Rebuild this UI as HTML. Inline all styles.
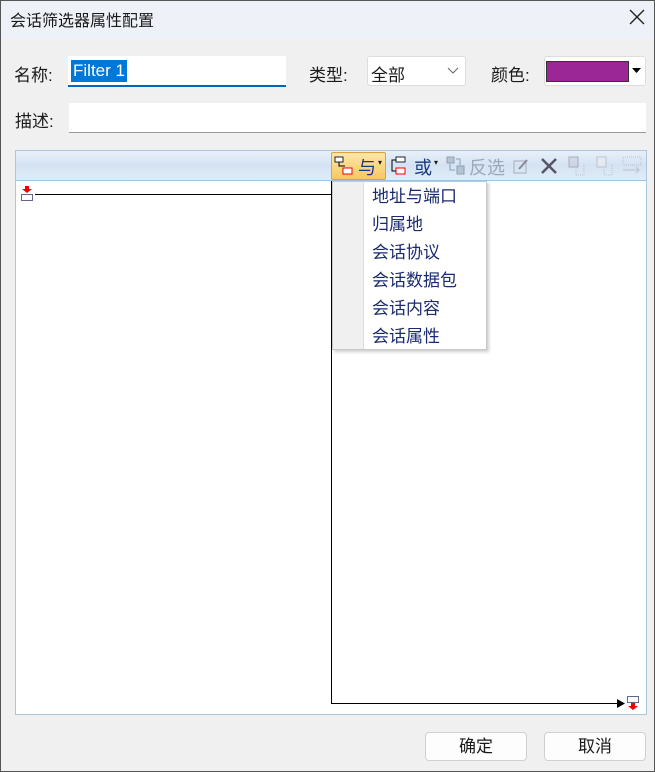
<!DOCTYPE html>
<html><head><meta charset="utf-8"><style>
*{margin:0;padding:0;box-sizing:border-box}
body{width:655px;height:772px;background:#f0f0f0;font-family:"Liberation Sans","Noto Sans CJK SC",sans-serif;font-size:16px;color:#1a1a1a;position:relative;overflow:hidden}
.a{position:absolute}
.lbl{font-size:16px}
</style></head><body>
<div class="a" style="left:0;top:0;width:655px;height:38px;background:#eef2f8"></div>
<div class="a lbl" style="left:10px;top:7px;font-size:16px">会话筛选器属性配置</div>
<svg class="a" style="left:628px;top:8px" width="18" height="18"><path d="M2 2L16 16M16 2L2 16" stroke="#222" stroke-width="1.4"/></svg>

<div class="a lbl" style="left:14px;top:61px;font-size:17px">名称:</div>
<div class="a" style="left:68px;top:56px;width:218px;height:31px;background:#fff;border-bottom:2px solid #0067c0"></div>
<div class="a" style="left:71px;top:60px;height:22px;background:#0078d7;color:#fff;padding:0 2px;font-size:17px;line-height:22px">Filter 1</div>
<div class="a lbl" style="left:309px;top:61px;font-size:17px">类型:</div>
<div class="a" style="left:367px;top:56px;width:99px;height:30px;background:#fff;border:1px solid #ddd;border-radius:3px"></div>
<div class="a lbl" style="left:371px;top:61px;font-size:17px">全部</div>
<svg class="a" style="left:447px;top:67px" width="12" height="8"><path d="M1 1L6 6L11 1" stroke="#666" fill="none"/></svg>
<div class="a lbl" style="left:491px;top:61px;font-size:17px">颜色:</div>
<div class="a" style="left:544px;top:56px;width:102px;height:30px;background:#fff;border:1px solid #ddd;border-radius:3px"></div>
<div class="a" style="left:546px;top:61px;width:83px;height:21px;background:#9a2795;border:1px solid #333"></div>
<svg class="a" style="left:632px;top:68px" width="9" height="6"><path d="M0 0H9L4.5 5z" fill="#000"/></svg>

<div class="a lbl" style="left:15px;top:107px;font-size:17px">描述:</div>
<div class="a" style="left:69px;top:103px;width:577px;height:30px;background:#fff;border-bottom:1px solid #999"></div>

<div class="a" style="left:15px;top:150px;width:632px;height:565px;background:#fff;border:1px solid #a8c8e0"></div>
<div class="a" style="left:16px;top:151px;width:630px;height:30px;background:linear-gradient(#e8f0fa,#d4e2f2 50%,#e0ecf8);border-bottom:1px solid #9cc4e4"></div>
<div class="a" style="left:331px;top:152px;width:55px;height:28px;background:linear-gradient(#fde6a8,#f8c860);border:1px solid #e0a040;border-radius:2px"></div>
<svg class="a" style="left:334px;top:156px" width="22" height="20"><rect x="1" y="1" width="8" height="5" fill="#fff" stroke="#223"/><rect x="9" y="12" width="9" height="6" fill="#fff" stroke="#e00"/><path d="M5 6v4h6" stroke="#000" fill="none"/></svg>
<div class="a" style="left:358px;top:154px;color:#1a3a80;font-size:18px">与</div>
<div class="a" style="left:378px;top:158px;font-size:8px">▾</div>
<svg class="a" style="left:390px;top:156px" width="22" height="20"><rect x="6" y="1" width="9" height="5" fill="#fff" stroke="#223"/><rect x="6" y="12" width="9" height="6" fill="#fff" stroke="#e00"/><path d="M6 4H2v11h4" stroke="#000" fill="none"/></svg>
<div class="a" style="left:414px;top:154px;color:#1a3a80;font-size:18px">或</div>
<div class="a" style="left:434px;top:158px;font-size:8px">▾</div>
<svg class="a" style="left:445px;top:155px" width="22" height="22" opacity=".55"><rect x="2" y="2" width="7" height="6" fill="#9ab" stroke="#567"/><rect x="12" y="11" width="7" height="8" fill="#9ab" stroke="#567"/><path d="M5 9v6h5M15 10V4h-4" stroke="#468" fill="none"/></svg>
<div class="a" style="left:469px;top:154px;color:#9aa8b8;font-size:18px">反选</div>
<svg class="a" style="left:512px;top:157px" width="18" height="18"><rect x="2" y="4" width="12" height="12" fill="none" stroke="#aab"/><path d="M7 12l8-9" stroke="#889" stroke-width="2"/></svg>
<svg class="a" style="left:540px;top:157px" width="18" height="18"><path d="M2 2L16 16M16 2L2 16" stroke="#556" stroke-width="2.5"/></svg>
<svg class="a" style="left:566px;top:155px" width="20" height="22" opacity=".6"><rect x="3" y="2" width="9" height="10" fill="#ccd" stroke="#889"/><path d="M10 14v6h8V8" stroke="#aab" fill="none" stroke-dasharray="1 1"/></svg>
<svg class="a" style="left:594px;top:155px" width="20" height="22" opacity=".6"><rect x="3" y="2" width="9" height="10" fill="#eee" stroke="#aab"/><path d="M10 14v6h8V8" stroke="#aab" fill="none" stroke-dasharray="1 1"/></svg>
<svg class="a" style="left:622px;top:155px" width="22" height="22" opacity=".6"><rect x="1" y="2" width="18" height="8" fill="none" stroke="#aab" stroke-dasharray="1 1"/><path d="M1 15h16l-3-3M17 15l-3 3" stroke="#aab" fill="none"/></svg>

<svg class="a" style="left:20px;top:186px" width="14" height="16"><path d="M5 0h4v3h3l-5 4-5-4h3z" fill="#e00"/><rect x="1.5" y="8.5" width="11" height="6" fill="#fff" stroke="#668"/></svg>
<div class="a" style="left:35px;top:194px;width:296px;height:1px;background:#000"></div>
<div class="a" style="left:331px;top:181px;width:1px;height:523px;background:#000"></div>
<div class="a" style="left:331px;top:703px;width:290px;height:1px;background:#000"></div>
<svg class="a" style="left:617px;top:699px" width="8" height="9"><path d="M0 0L8 4.5L0 9z" fill="#000"/></svg>
<svg class="a" style="left:626px;top:695px" width="14" height="16"><rect x="1.5" y="1.5" width="11" height="6" fill="#fff" stroke="#668"/><path d="M5 8h4v3h3l-5 4-5-4h3z" fill="#e00"/></svg>

<div class="a" style="left:332px;top:181px;width:155px;height:169px;background:#fff;border:1px solid #c8c8c8;box-shadow:2px 2px 3px rgba(0,0,0,.2)"></div>
<div class="a" style="left:333px;top:182px;width:31px;height:167px;background:#f0f0f0;border-right:1px solid #ddd"></div>
<div class="a" style="left:372px;top:183px;color:#1a2a70;font-size:17px;line-height:28px">地址与端口<br>归属地<br>会话协议<br>会话数据包<br>会话内容<br>会话属性</div>

<div class="a" style="left:425px;top:732px;width:102px;height:29px;background:#fdfdfd;border:1px solid #d0d0d0;border-radius:4px;text-align:center;line-height:27px;font-size:17px">确定</div>
<div class="a" style="left:544px;top:732px;width:102px;height:29px;background:#fdfdfd;border:1px solid #d0d0d0;border-radius:4px;text-align:center;line-height:27px;font-size:17px">取消</div>
<div class="a" style="left:0;top:0;width:655px;height:772px;border:1px solid #555"></div>
</body></html>
